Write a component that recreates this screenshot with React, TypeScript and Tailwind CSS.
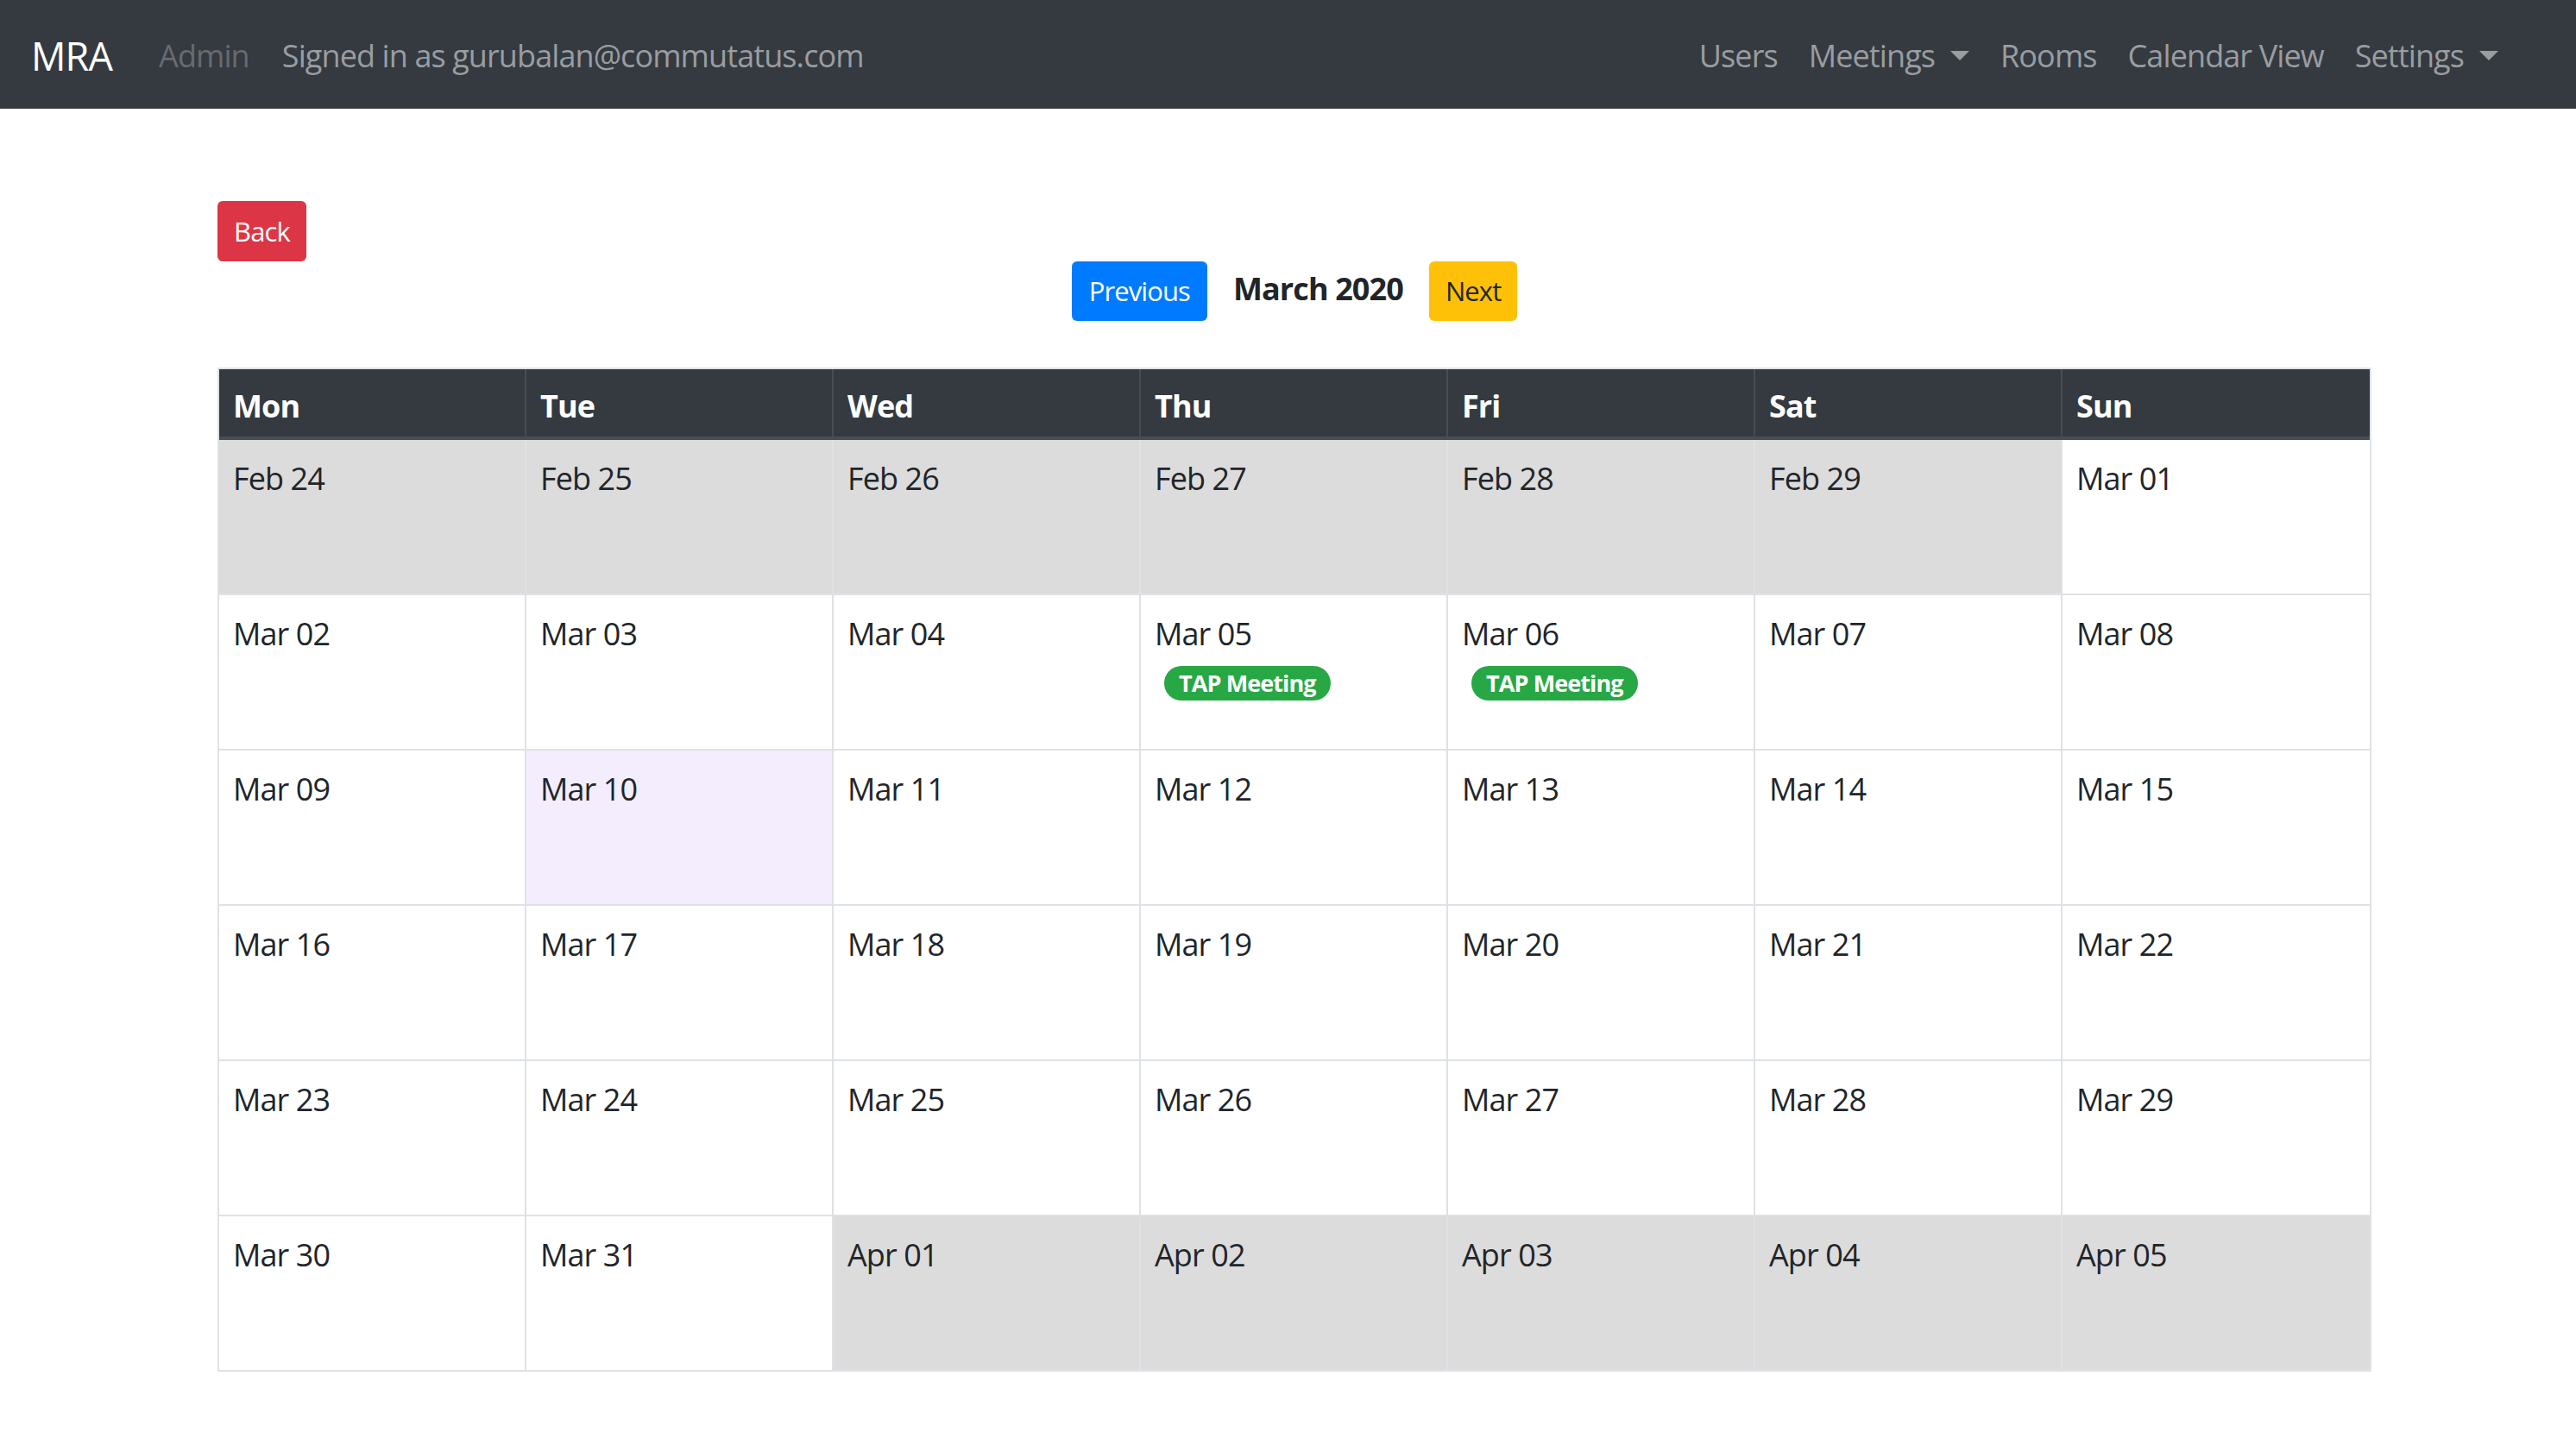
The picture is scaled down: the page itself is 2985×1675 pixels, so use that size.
import React from "react";

type Day = {
  label: string;
  muted?: boolean;
  today?: boolean;
  events?: string[];
};

const weekdays = ["Mon", "Tue", "Wed", "Thu", "Fri", "Sat", "Sun"];

const weeks: Day[][] = [
  [
    { label: "Feb 24", muted: true },
    { label: "Feb 25", muted: true },
    { label: "Feb 26", muted: true },
    { label: "Feb 27", muted: true },
    { label: "Feb 28", muted: true },
    { label: "Feb 29", muted: true },
    { label: "Mar 01" },
  ],
  [
    { label: "Mar 02" },
    { label: "Mar 03" },
    { label: "Mar 04" },
    { label: "Mar 05", events: ["TAP Meeting"] },
    { label: "Mar 06", events: ["TAP Meeting"] },
    { label: "Mar 07" },
    { label: "Mar 08" },
  ],
  [
    { label: "Mar 09" },
    { label: "Mar 10", today: true },
    { label: "Mar 11" },
    { label: "Mar 12" },
    { label: "Mar 13" },
    { label: "Mar 14" },
    { label: "Mar 15" },
  ],
  [
    { label: "Mar 16" },
    { label: "Mar 17" },
    { label: "Mar 18" },
    { label: "Mar 19" },
    { label: "Mar 20" },
    { label: "Mar 21" },
    { label: "Mar 22" },
  ],
  [
    { label: "Mar 23" },
    { label: "Mar 24" },
    { label: "Mar 25" },
    { label: "Mar 26" },
    { label: "Mar 27" },
    { label: "Mar 28" },
    { label: "Mar 29" },
  ],
  [
    { label: "Mar 30" },
    { label: "Mar 31" },
    { label: "Apr 01", muted: true },
    { label: "Apr 02", muted: true },
    { label: "Apr 03", muted: true },
    { label: "Apr 04", muted: true },
    { label: "Apr 05", muted: true },
  ],
];

const Caret = () => (
  <span className="ml-[18px] inline-block h-0 w-0 border-t-[11px] border-x-[11px] border-t-[#9a9da0] border-x-transparent" />
);

const Navbar = () => (
  <nav className="flex h-[126px] items-center bg-[#343a40] pl-[36px] pr-[72px] pt-[3px] text-[36px]">
    <span className="mr-[36px] text-[45px] text-white">MRA</span>
    <span className="px-[18px] text-[#676b70]">Admin</span>
    <span className="ml-[20px] text-[#9a9da0]">Signed in as gurubalan@commutatus.com</span>

    {/* right side links */}
    <div className="ml-auto flex items-center text-[#9a9da0]">
      <span className="px-[18px]">Users</span>
      <span className="flex items-center px-[18px]">
        Meetings
        <Caret />
      </span>
      <span className="px-[18px]">Rooms</span>
      <span className="px-[18px]">Calendar View</span>
      <span className="flex items-center px-[18px]">
        Settings
        <Caret />
      </span>
    </div>
  </nav>
);

const DayCell = ({ day, last }: { day: Day; last: boolean }) => {
  let bg = "bg-white";
  if (day.muted) bg = "bg-[#dcdcdc]";
  if (day.today) bg = "bg-[#f3edfd]";

  return (
    <div
      className={`h-[180px] border-b-2 border-[#dee2e6] px-[16px] pt-[18px] ${last ? "" : "border-r-2"} ${bg}`}
    >
      <div className="leading-[54px]">{day.label}</div>
      {day.events?.map((ev) => (
        <span
          key={ev}
          className="ml-[11px] mt-[4px] inline-flex h-[40px] items-center rounded-full bg-[#28a745] px-[17px] text-[27px] font-bold text-white"
        >
          {ev}
        </span>
      ))}
    </div>
  );
};

export default function App() {
  return (
    <div
      className="min-h-screen bg-white text-[36px] tracking-[-0.025em] text-[#212529]"
      style={{ fontFamily: '"Open Sans", "Noto Sans", sans-serif' }}
    >
      <Navbar />

      <main className="ml-[252px] w-[2496px] pt-[107px]">
        <button className="h-[70px] rounded-[6px] bg-[#dc3545] px-[19px] text-[31px] text-white">
          Back
        </button>

        <div className="flex items-center justify-center gap-[30px]">
          <button className="h-[69px] rounded-[6px] bg-[#007bff] px-[20px] text-[31px] text-white">
            Previous
          </button>
          <span className="-mt-[6px] font-bold">March 2020</span>
          <button className="h-[69px] rounded-[6px] bg-[#ffc107] px-[19px] text-[31px] text-[#212529]">
            Next
          </button>
        </div>

        <div className="mt-[54px] border-x-2 border-t-2 border-[#dee2e6]">
          <div className="grid grid-cols-7 border-b-4 border-[#454d55] bg-[#343a40]">
            {weekdays.map((d, i) => (
              <div
                key={d}
                className={`flex h-[78px] items-center px-[16px] pt-[8px] font-bold text-white ${i < 6 ? "border-r-2 border-[#454d55]" : ""}`}
              >
                {d}
              </div>
            ))}
          </div>
          <div className="grid grid-cols-7">
            {weeks.map((week) =>
              week.map((day, i) => <DayCell key={day.label} day={day} last={i === 6} />)
            )}
          </div>
        </div>
      </main>
    </div>
  );
}
